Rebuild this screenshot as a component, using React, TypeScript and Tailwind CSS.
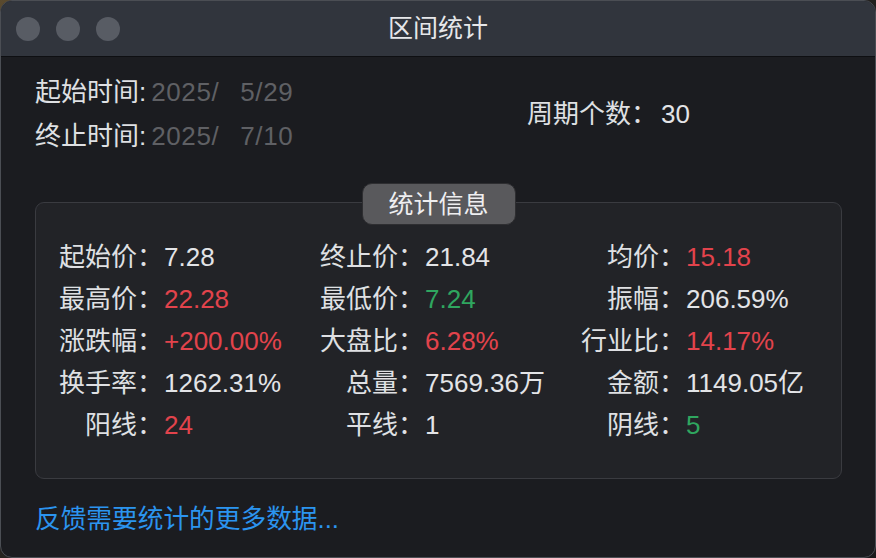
const FONT = {fontFamily: '"Liberation Sans", "Noto Sans CJK SC", sans-serif'};

type Cell = {label: string; value: string; tone?: 'red' | 'green'};

const rows: Cell[][] = [
  [
    {label: '起始价：', value: '7.28'},
    {label: '终止价：', value: '21.84'},
    {label: '均价：', value: '15.18', tone: 'red'},
  ],
  [
    {label: '最高价：', value: '22.28', tone: 'red'},
    {label: '最低价：', value: '7.24', tone: 'green'},
    {label: '振幅：', value: '206.59%'},
  ],
  [
    {label: '涨跌幅：', value: '+200.00%', tone: 'red'},
    {label: '大盘比：', value: '6.28%', tone: 'red'},
    {label: '行业比：', value: '14.17%', tone: 'red'},
  ],
  [
    {label: '换手率：', value: '1262.31%'},
    {label: '总量：', value: '7569.36万'},
    {label: '金额：', value: '1149.05亿'},
  ],
  [
    {label: '阳线：', value: '24', tone: 'red'},
    {label: '平线：', value: '1'},
    {label: '阴线：', value: '5', tone: 'green'},
  ],
];

const toneClass = (tone?: 'red' | 'green') =>
  tone === 'red'
    ? 'text-[#e2434c]'
    : tone === 'green'
      ? 'text-[#2fa65f]'
      : 'text-[#e3e4e7]';

export default function App() {
  return (
    <div
      className="w-[876px] h-[558px] bg-[linear-gradient(135deg,#5a4a2e_0%,#2a2620_20%,#1a1a1c_100%)]"
      style={FONT}
    >
      <div className="w-full h-full rounded-[12px] overflow-hidden border border-[#4b4e54] bg-[#1b1c20] flex flex-col">
        {/* title bar */}
        <div className="h-[56px] shrink-0 bg-[#31353d] border-b border-[#0e0f12] grid grid-cols-[1fr_auto_1fr] items-center">
          <div className="flex items-center gap-[16px] pl-[15px]">
            <span className="w-[24px] h-[24px] rounded-full bg-[#585c64]" />
            <span className="w-[24px] h-[24px] rounded-full bg-[#585c64]" />
            <span className="w-[24px] h-[24px] rounded-full bg-[#585c64]" />
          </div>
          <div className="text-[25px] text-[#e6e7ea] leading-none">区间统计</div>
          <div />
        </div>

        {/* body */}
        <div className="flex-1 pl-[34px] pr-[33px]">
          <div className="flex items-center pt-[13px] text-[26px] leading-[44px]">
            <div className="w-[492px]">
              <div className="flex">
                <span className="text-[#dfe0e3]">起始时间:</span>
                <span className="text-[#5f6064] ml-[5px] tracking-[0.6px]">2025/</span>
                <span className="text-[#5f6064] ml-[21px] tracking-[0.6px]">5/29</span>
              </div>
              <div className="flex">
                <span className="text-[#dfe0e3]">终止时间:</span>
                <span className="text-[#5f6064] ml-[5px] tracking-[0.6px]">2025/</span>
                <span className="text-[#5f6064] ml-[21px] tracking-[0.6px]">7/10</span>
              </div>
            </div>
            <div className="flex">
              <span className="text-[#dfe0e3]">周期个数：</span>
              <span className="text-[#e3e4e7] ml-[4px]">30</span>
            </div>
          </div>

          {/* stats group */}
          <div className="relative mt-[44px] h-[277px] rounded-[9px] border border-[#3a3b40] bg-[#222327] pt-[33px] pl-[23px]">
            <div className="absolute -top-[20px] left-1/2 -translate-x-1/2 w-[154px] h-[42px] rounded-[10px] border border-[#2e2e31] bg-[#59595c] flex items-center justify-center text-[25px] text-[#eeeef0] leading-none">
              统计信息
            </div>
            <div className="grid grid-cols-[261px_261px_261px] text-[26px] leading-[42px]">
              {rows.map((row, i) =>
                row.map((cell, j) => (
                  <div key={`${i}-${j}`} className="flex">
                    <span className="w-[104px] text-right text-[#dfe0e3]">{cell.label}</span>
                    <span className={`ml-[1px] ${toneClass(cell.tone)}`}>{cell.value}</span>
                  </div>
                )),
              )}
            </div>
          </div>

          <div className="mt-[19px] text-[25.7px] leading-[42px] text-[#2b94ef]">
            反馈需要统计的更多数据...
          </div>
        </div>
      </div>
    </div>
  );
}
